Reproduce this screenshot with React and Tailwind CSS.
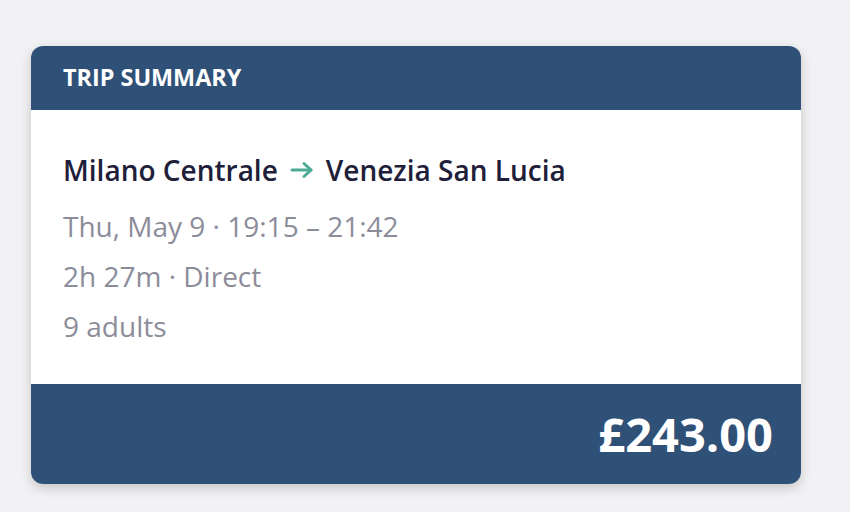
import React from 'react';

const trip = {
  from: 'Milano Centrale',
  to: 'Venezia San Lucia',
  details: ['Thu, May 9 · 19:15 – 21:42', '2h 27m · Direct', '9 adults'],
  total: '£243.00',
};

const Arrow = () => (
  <svg width="24" height="18" viewBox="0 0 24 18" fill="none" stroke="#4daa94" strokeWidth="3" strokeLinecap="round" strokeLinejoin="round">
    <path d="M2 9h19" />
    <path d="M14 2.5 21 9l-7 6.5" />
  </svg>
);

export default function App() {
  return (
    <div className="min-h-screen bg-[#f2f2f4] pl-[31px] pt-[46px] font-['Open_Sans',sans-serif]">
      <section className="w-[770px] overflow-hidden rounded-xl bg-white shadow-[0_4px_12px_rgba(0,0,0,0.18)]">
        <div className="flex h-16 items-center bg-[#2f5077] px-8">
          <h2 className="text-[23.4px] font-bold uppercase text-white">Trip Summary</h2>
        </div>

        <div className="h-[274px] px-8 pt-[46px]">
          <p className="flex items-center gap-3 text-[28px] font-semibold leading-none text-[#1e2039]">
            <span>{trip.from}</span>
            <Arrow />
            <span>{trip.to}</span>
          </p>
          <div className="mt-[17px] text-[28px] leading-[50px] text-[#8c8c9a]">
            {trip.details.map((line) => (
              <p key={line}>{line}</p>
            ))}
          </div>
        </div>

        <div className="flex h-[100px] items-center justify-end bg-[#2f5077] px-7">
          <span className="text-[47px] font-bold text-white">{trip.total}</span>
        </div>
      </section>
    </div>
  );
}
